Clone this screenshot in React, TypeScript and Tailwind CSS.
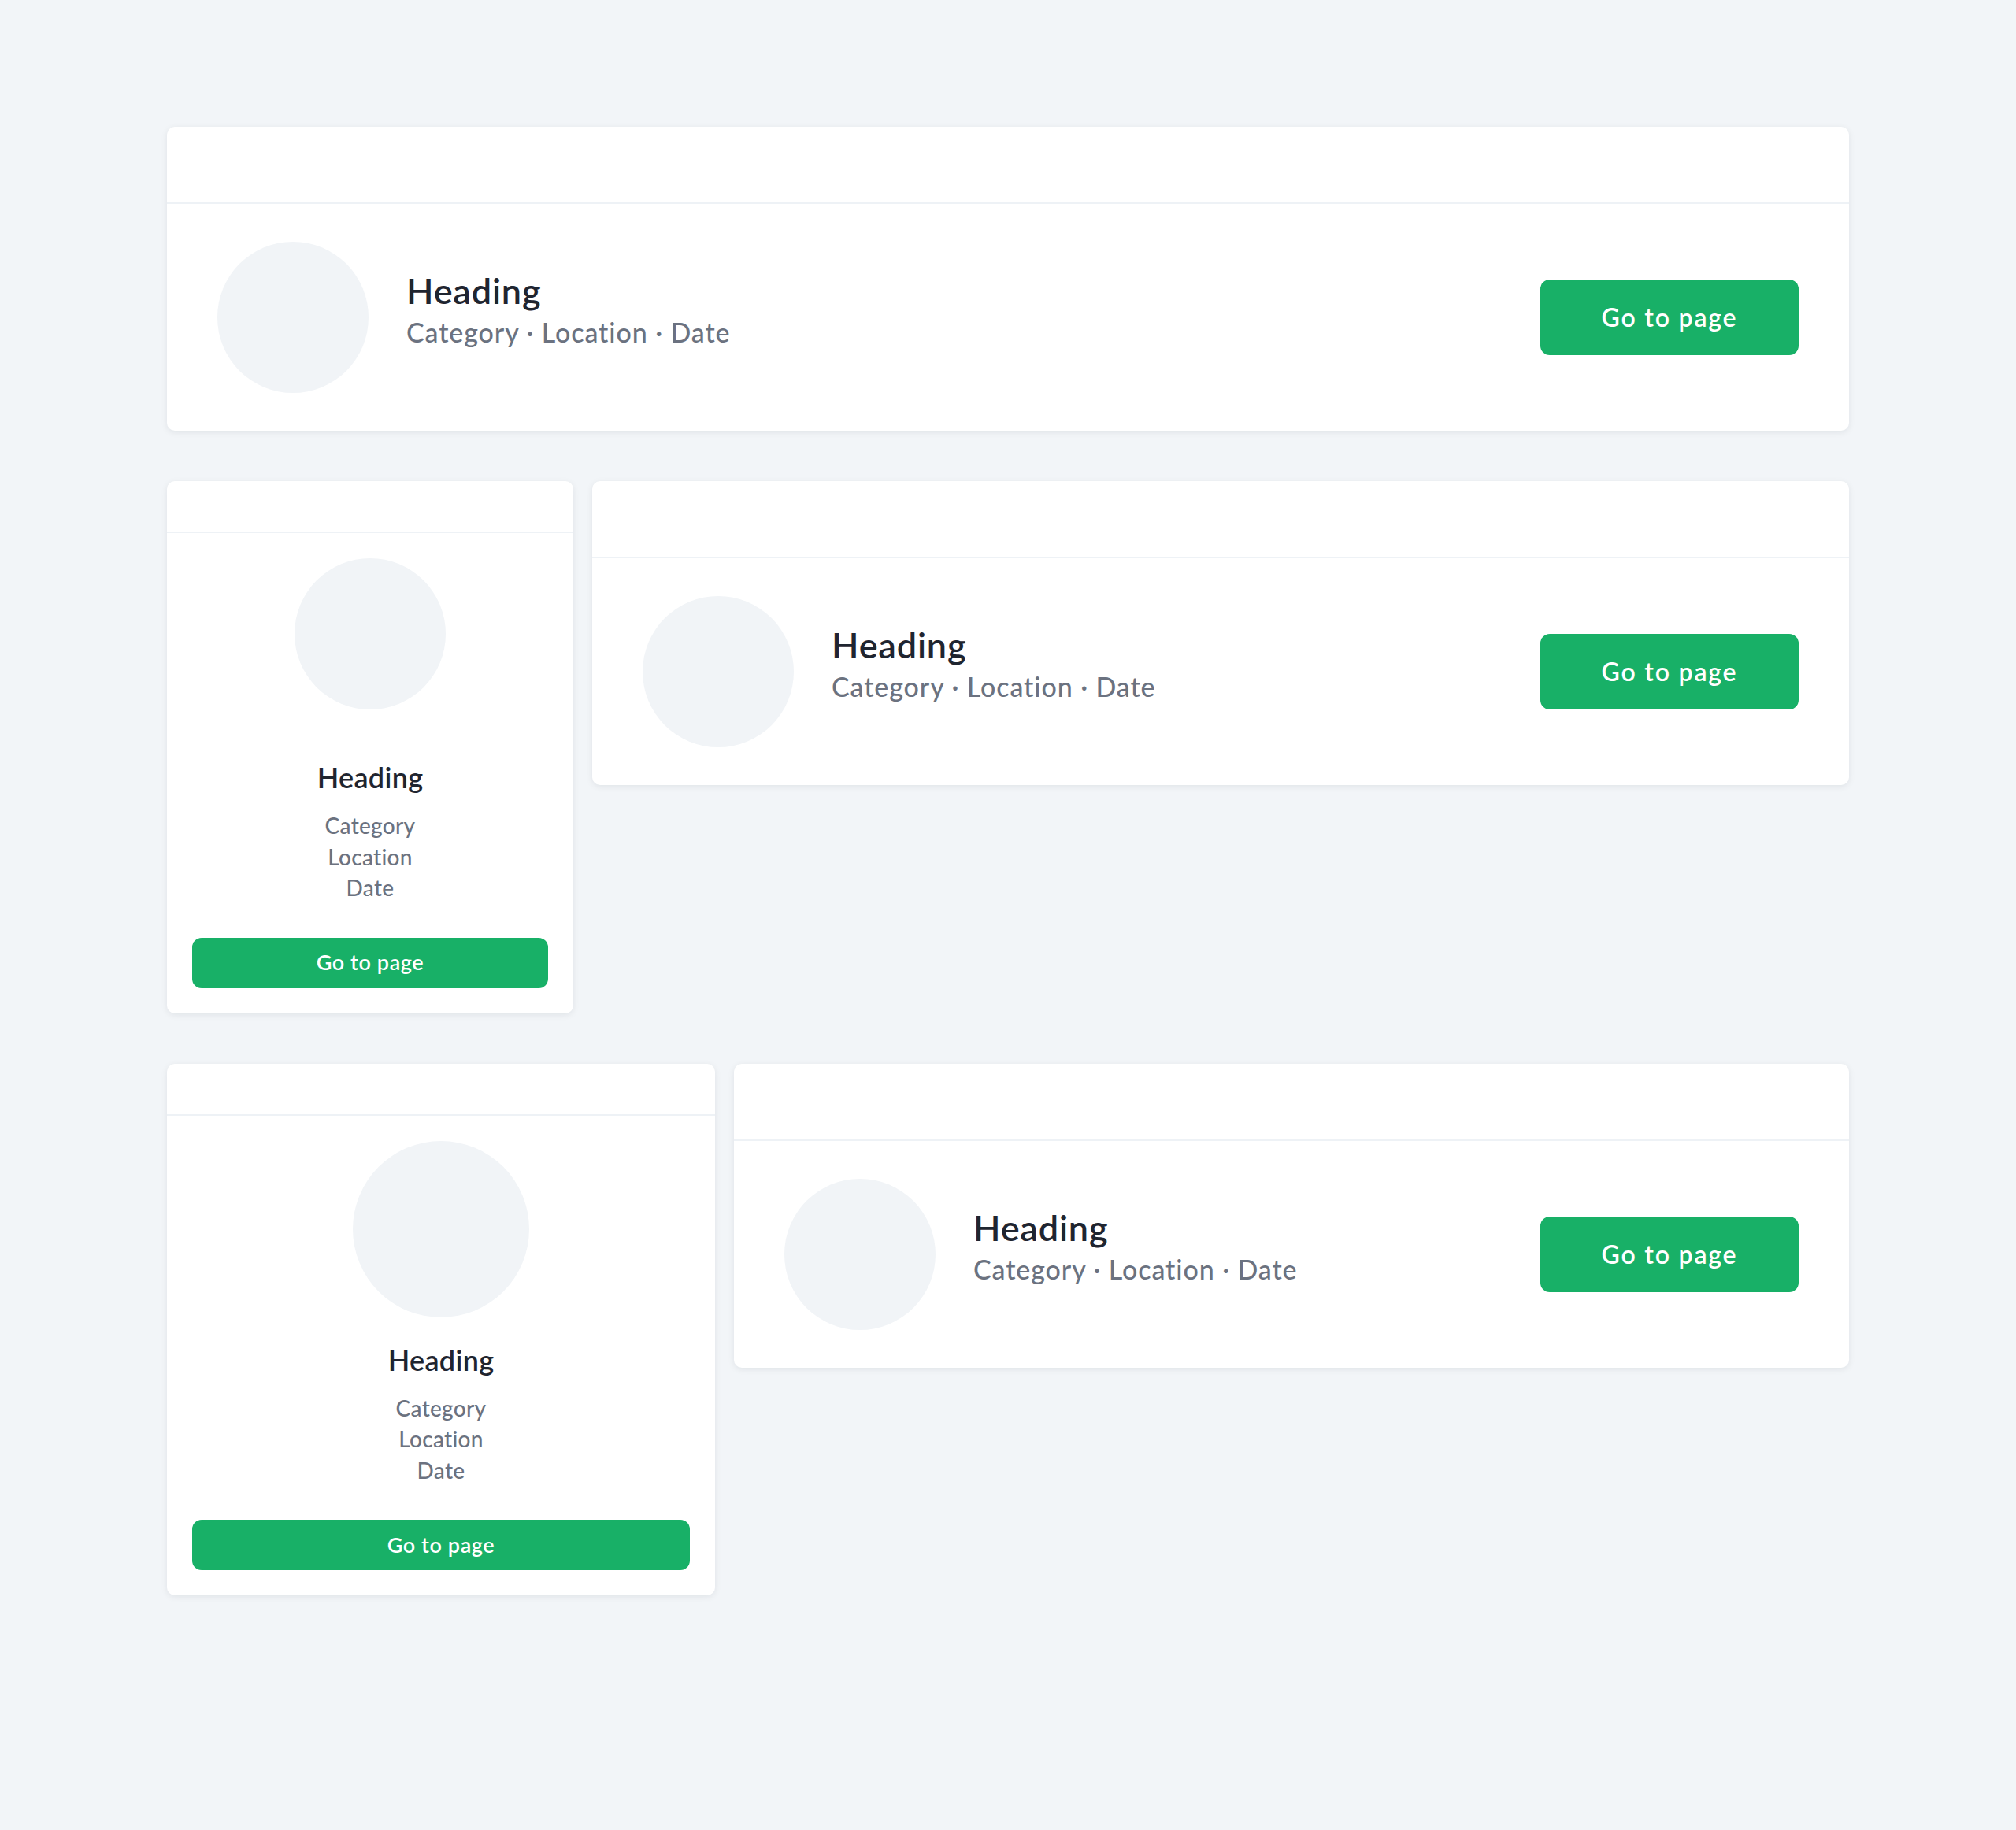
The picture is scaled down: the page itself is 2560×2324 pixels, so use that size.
import React from 'react';

const font = { fontFamily: 'Lato, "Noto Sans", sans-serif' };

const WideCard: React.FC = () => {
  return (
    <div className="flex-1 min-w-0 bg-white rounded-[10px] shadow-[0_2px_8px_rgba(15,23,42,0.08)] overflow-hidden">
      <div className="h-[98px] border-b-2 border-[#eef2f6]" />
      <div className="flex items-center px-16 py-12">
        <div className="w-48 h-48 shrink-0 rounded-full bg-[#f1f4f7]" />
        <div className="ml-12 flex-1 min-w-0 pb-5">
          <h2 className="text-[45px] leading-[54px] tracking-[0.8px] font-semibold text-[#1f2530]">Heading</h2>
          <p className="mt-1 text-[34px] leading-[44px] tracking-[0.9px] font-medium text-[#6b7280]">
            Category · Location · Date
          </p>
        </div>
        <button className="w-[328px] h-24 shrink-0 rounded-xl bg-[#18b067] text-white text-[32px] tracking-[1.8px] font-semibold">
          Go to page
        </button>
      </div>
    </div>
  );
};

const TallCard: React.FC<{ width: string; circle: string }> = ({ width, circle }) => {
  return (
    <div className={`${width} shrink-0 bg-white rounded-[10px] shadow-[0_2px_8px_rgba(15,23,42,0.08)] overflow-hidden`}>
      <div className="h-[66px] border-b-2 border-[#eef2f6]" />
      <div className="flex flex-col items-center p-8">
        <div className="h-56 w-full flex justify-center">
          <div className={`${circle} rounded-full bg-[#f1f4f7]`} />
        </div>
        <h2 className="mt-8 text-[36px] leading-[44px] tracking-[0.3px] font-semibold text-[#1f2530]">Heading</h2>
        <div className="mt-5 flex flex-col items-center text-[28px] leading-[39.5px] tracking-[0.3px] font-medium text-[#6b7280]">
          <span>Category</span>
          <span>Location</span>
          <span>Date</span>
        </div>
        <button className="mt-[43px] w-full h-16 rounded-xl bg-[#18b067] text-white text-[27px] tracking-[0.6px] font-semibold">
          Go to page
        </button>
      </div>
    </div>
  );
};

const App: React.FC = () => {
  return (
    <div className="min-h-screen bg-[#f2f5f8] pt-[161px] pb-[297px]" style={font}>
      <div className="w-[2136px] mx-auto flex flex-col gap-16">
        <WideCard />

        <div className="flex items-start gap-6">
          <TallCard width="w-[516px]" circle="w-48 h-48" />
          <WideCard />
        </div>

        <div className="flex items-start gap-6">
          <TallCard width="w-[696px]" circle="w-56 h-56" />
          <WideCard />
        </div>
      </div>
    </div>
  );
};

export default App;
